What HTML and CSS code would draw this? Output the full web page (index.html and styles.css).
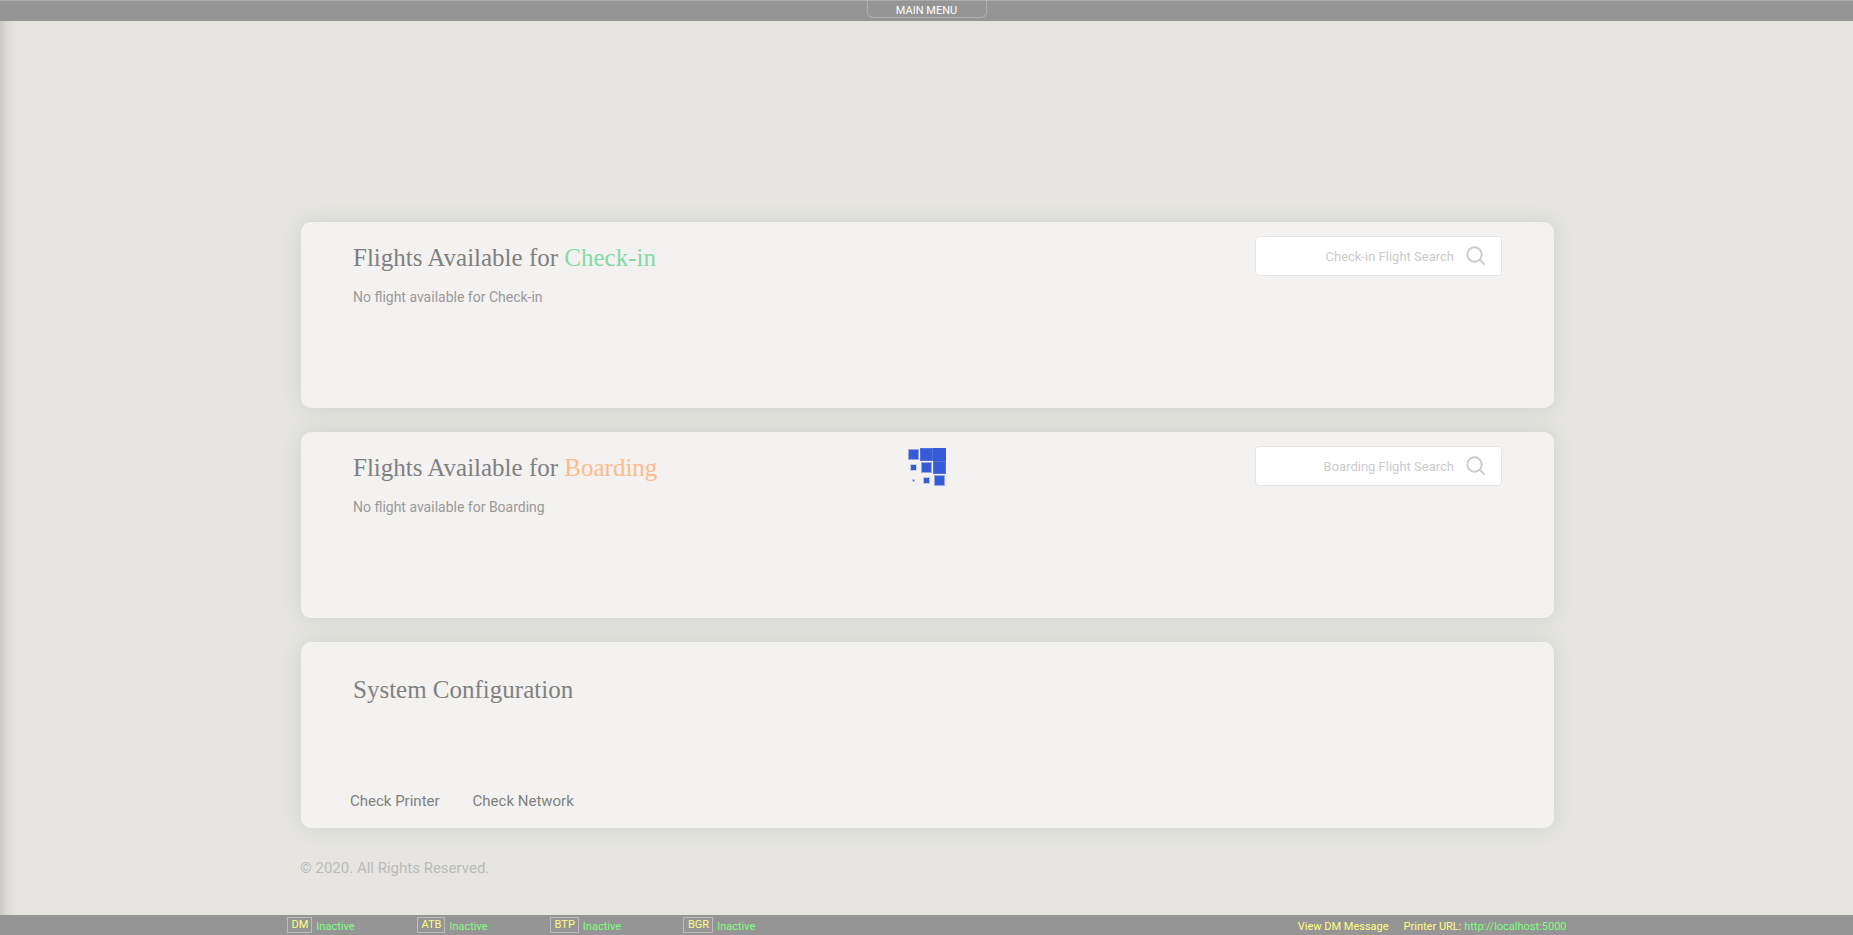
FILE: index.html
```html
<!DOCTYPE html>
<html lang="en">
<head>
<meta charset="utf-8">
<title>Flights</title>
<link rel="stylesheet" href="styles.css">
</head>
<body>
<header class="topbar">
  <button class="menu-tab" type="button">MAIN MENU</button>
</header>

<main class="content">
  <section class="card">
    <div class="card-text">
      <h2 class="card-title">Flights Available for <span class="checkin">Check-in</span></h2>
      <p class="empty">No flight available for Check-in</p>
    </div>
    <form class="search">
      <input class="search-input" type="text" placeholder="Check-in Flight Search" aria-label="Check-in Flight Search">
      <button class="search-button" type="submit" aria-label="Search check-in flights">
        <svg width="20" height="20" viewBox="0 0 20 20"><circle cx="8.5" cy="8.5" r="7.2"/><path d="M13.6 13.6L18.6 18.6"/></svg>
      </button>
    </form>
  </section>

  <section class="card">
    <div class="card-text">
      <h2 class="card-title">Flights Available for <span class="boarding">Boarding</span></h2>
      <p class="empty">No flight available for Boarding</p>
    </div>
    <form class="search">
      <input class="search-input" type="text" placeholder="Boarding Flight Search" aria-label="Boarding Flight Search">
      <button class="search-button" type="submit" aria-label="Search boarding flights">
        <svg width="20" height="20" viewBox="0 0 20 20"><circle cx="8.5" cy="8.5" r="7.2"/><path d="M13.6 13.6L18.6 18.6"/></svg>
      </button>
    </form>
  </section>

  <section class="card card-system">
    <h2 class="card-title">System Configuration</h2>
    <nav class="system-links">
      <a href="#printer">Check Printer</a>
      <a href="#network">Check Network</a>
    </nav>
  </section>

  <p class="copyright">© 2020. All Rights Reserved.</p>
</main>

<footer class="statusbar">
  <div class="status-inner">
    <ul class="devices">
      <li><button class="device" type="button">DM</button><span class="state">Inactive</span></li>
      <li><button class="device" type="button">ATB</button><span class="state">Inactive</span></li>
      <li><button class="device" type="button">BTP</button><span class="state">Inactive</span></li>
      <li><button class="device" type="button">BGR</button><span class="state">Inactive</span></li>
    </ul>
    <div class="status-links">
      <a href="#dm">View DM Message</a>
      <span>Printer URL: <span class="state">http://localhost:5000</span></span>
    </div>
  </div>
</footer>

<svg class="loader" width="39" height="39" viewBox="0 0 39 39" role="img" aria-label="Loading">
  <g>
    <rect x="1" y="1" width="11" height="11" opacity=".5"/>
    <rect x="13" y="0" width="13" height="13" opacity=".85"/>
    <rect x="26" y="0" width="13" height="13"/>
    <rect x="3" y="16" width="7" height="7" opacity=".22"/>
    <rect x="14" y="14" width="11" height="11" opacity=".5"/>
    <rect x="26" y="13" width="13" height="13" opacity=".85"/>
    <rect x="5" y="31" width="3" height="3" opacity=".25"/>
    <rect x="16" y="29" width="7" height="7" opacity=".3"/>
    <rect x="27" y="27" width="11" height="11" opacity=".5"/>
  </g>
  <g>
    <rect x="2" y="2" width="9" height="9"/>
    <rect x="14" y="1" width="11" height="11"/>
    <rect x="4" y="17" width="5" height="5"/>
    <rect x="15" y="15" width="9" height="9"/>
    <rect x="27" y="14" width="11" height="11"/>
    <rect x="6" y="32" width="1" height="1"/>
    <rect x="17" y="30" width="5" height="5"/>
    <rect x="28" y="28" width="9" height="9"/>
  </g>
</svg>
</body>
</html>
```
FILE: styles.css
```css
* {
  box-sizing: border-box;
}

body {
  margin: 0;
  min-height: 100vh;
  display: flex;
  flex-direction: column;
  background: linear-gradient(to right, rgba(0, 0, 0, 0.13), rgba(0, 0, 0, 0.04) 8px, transparent 18px) #e6e5e1;
  color: #808080;
  font-family: Roboto, "Liberation Sans", sans-serif;
  font-size: 15px;
}

h2, p, ul {
  margin: 0;
  padding: 0;
}

button {
  font-family: inherit;
  cursor: pointer;
}

a {
  color: inherit;
  text-decoration: none;
}

.topbar {
  display: flex;
  justify-content: center;
  align-items: flex-start;
  height: 21px;
  background: #959595;
  border-top: 1px solid #acacac;
}

.menu-tab {
  width: 120px;
  height: 17px;
  padding: 3px 0 0;
  border: 1px solid #b0b0b0;
  border-top: 0;
  border-radius: 0 0 6px 6px;
  background: transparent;
  color: #fff;
  font-size: 11px;
  line-height: 13px;
}

.content {
  flex: 1;
  display: flex;
  flex-direction: column;
  gap: 24px;
  width: 100%;
  max-width: 1255px;
  margin: 0 auto;
  padding: 201px 0 24px 2px;
}

.card {
  display: flex;
  justify-content: space-between;
  align-items: flex-start;
  min-height: 186px;
  padding: 14px 52px;
  border-radius: 10px;
  background: #f3f2f0;
  box-shadow: 0 0 20px rgba(165, 180, 170, 0.4);
}

.card-text {
  padding-top: 7px;
}

.card-title {
  font-family: "Liberation Serif", serif;
  font-size: 25px;
  font-weight: 400;
  line-height: 30px;
}

.checkin {
  color: #80dba6;
}

.boarding {
  color: #ffbb8b;
}

.empty {
  margin-top: 15px;
  color: #999;
  font-size: 14px;
  line-height: 18px;
}

.search {
  display: flex;
  align-items: center;
  width: 247px;
  height: 40px;
  padding-right: 15px;
  border: 1px solid #e4e4e4;
  border-radius: 4px;
  background: #fff;
}

.search-input {
  flex: 1;
  min-width: 0;
  padding: 0;
  border: 0;
  outline: 0;
  background: transparent;
  color: #808080;
  font-family: inherit;
  font-size: 13px;
  text-align: right;
}

.search-input::placeholder {
  color: #cbcbcb;
}

.search-button {
  display: flex;
  margin-left: 12px;
  padding: 0 0 1px;
  border: 0;
  background: transparent;
}

.search-button svg {
  fill: none;
  stroke: #cbcccc;
  stroke-width: 2;
}

.card-system {
  flex-direction: column;
  padding-top: 33px;
}

.system-links {
  display: flex;
  gap: 33px;
  margin-left: -3px;
  padding-bottom: 3px;
  line-height: 20px;
}

.copyright {
  margin-top: 6px;
  margin-left: -1px;
  color: #bababa;
  line-height: 20px;
}

.statusbar {
  height: 20px;
  background: #959595;
  color: #ffff80;
  font-size: 11px;
  line-height: 14px;
}

.status-inner {
  display: flex;
  justify-content: space-between;
  max-width: 1280px;
  margin: 0 auto;
  padding-top: 2px;
}

.devices {
  display: flex;
  gap: 62px;
  list-style: none;
}

.devices li {
  display: flex;
  gap: 4px;
}

.device {
  height: 16px;
  padding: 0 3px 0 4px;
  border: 1px solid #bcbcbc;
  background: transparent;
  color: inherit;
  font-size: 11px;
  line-height: 14px;
}

.state {
  color: #80ff80;
}

.devices .state,
.status-links {
  padding-top: 3px;
}

.status-links {
  display: flex;
  gap: 15px;
}

.loader {
  position: fixed;
  inset: 0;
  margin: auto;
  fill: #355cd6;
}
```
